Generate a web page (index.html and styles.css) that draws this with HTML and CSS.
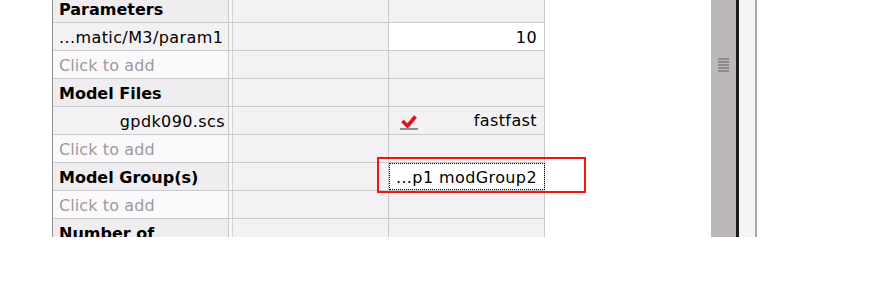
FILE: index.html
```html
<!DOCTYPE html>
<html lang="en">
  <head>
    <meta charset="UTF-8" />
    <title>Model Setup</title>
    <link rel="stylesheet" href="styles.css">
  </head>
  <body>
    <div class="view">
      <div class="grid">
        <div class="rows">
          <div class="row head">
            <div class="cell c1">Parameters</div>
            <div class="cell c2"></div>
            <div class="cell c3"></div>
          </div>
          <div class="row">
            <div class="cell c1">...matic/M3/param1</div>
            <div class="cell c2"></div>
            <div class="cell c3 edit num">10</div>
          </div>
          <div class="row">
            <div class="cell c1 add">Click to add</div>
            <div class="cell c2"></div>
            <div class="cell c3"></div>
          </div>
          <div class="row head">
            <div class="cell c1">Model Files</div>
            <div class="cell c2"></div>
            <div class="cell c3"></div>
          </div>
          <div class="row">
            <div class="cell c1 num">gpdk090.scs</div>
            <div class="cell c2"></div>
            <div class="cell c3 check">
              <svg class="tick" width="18" height="16" viewBox="0 0 18 16">
                <rect x="0" y="0" width="18" height="14" fill="#f1eff1" />
                <rect x="0" y="14" width="18" height="2" fill="#8c8a8c" />
                <polyline points="2.5,7 7.5,12 15.5,2.5" fill="none" stroke="#e2121e" stroke-width="3.6" stroke-linejoin="round" />
              </svg>
              <span>fastfast</span>
            </div>
          </div>
          <div class="row">
            <div class="cell c1 add">Click to add</div>
            <div class="cell c2"></div>
            <div class="cell c3"></div>
          </div>
          <div class="row head">
            <div class="cell c1">Model Group(s)</div>
            <div class="cell c2"></div>
            <div class="cell c3 focus">...p1 modGroup2</div>
          </div>
          <div class="row">
            <div class="cell c1 add">Click to add</div>
            <div class="cell c2"></div>
            <div class="cell c3"></div>
          </div>
          <div class="row head">
            <div class="cell c1">Number of</div>
            <div class="cell c2"></div>
            <div class="cell c3"></div>
          </div>
        </div>
      </div>

      <div class="scrollbar">
        <div class="track">
          <div class="grip">
            <span></span><span></span><span></span><span></span><span></span>
          </div>
        </div>
        <div class="edge"></div>
        <div class="gutter"></div>
      </div>

      <div class="highlight"></div>
    </div>
  </body>
</html>
```

FILE: styles.css
```css
body {
  margin: 0;
  background: #ffffff;
  font-family: "DejaVu Sans", Verdana, sans-serif;
  font-size: 16px;
  color: #000000;
}
.view {
  position: relative;
  display: flex;
  height: 237px;
  padding-left: 52px;
}
.grid {
  width: 493px;
  height: 237px;
  overflow: hidden;
  border-left: 1px solid #8e8e8e;
  box-sizing: border-box;
}
.rows {
  margin-top: -5px;
}
.row {
  display: grid;
  grid-template-columns: 176px 160px 156px;
  height: 28px;
  box-sizing: border-box;
  border-bottom: 1px solid #c9c9c9;
}
.cell {
  height: 27px;
  line-height: 29px;
  padding: 0 7px 0 6px;
  letter-spacing: 0.4px;
  white-space: nowrap;
  overflow: hidden;
  background: #f3f1f3;
  border-right: 1px solid #c9c9c9;
}
.c1 {
  padding-right: 3px;
}
.c2 {
  background: linear-gradient(to right, #f8f6f8 0 3px, #d2d0d2 3px 4px, #f3f1f3 4px);
}
.head .c1 {
  font-weight: bold;
  letter-spacing: 0;
  background: #efedef;
}
.add {
  color: #9c9a9c;
  letter-spacing: 0.1px;
  background: #fbf9fb;
}
.num {
  text-align: right;
}
.edit {
  background: #ffffff;
}
.check {
  display: flex;
  align-items: center;
  justify-content: space-between;
  padding-left: 11px;
}
.tick {
  display: block;
  margin-top: 2px;
}
.focus {
  background: #ffffff;
  outline: 1px dotted #000000;
  outline-offset: -1px;
  text-align: right;
}
.highlight {
  position: absolute;
  left: 377px;
  top: 157px;
  width: 209px;
  height: 36px;
  box-sizing: border-box;
  border: 2px solid #f21414;
}
.scrollbar {
  display: flex;
  margin-left: 166px;
  height: 237px;
}
.track {
  width: 25px;
  background: #bbb7bb;
}
.grip {
  display: flex;
  flex-direction: column;
  gap: 1px;
  width: 11px;
  margin: 58px 0 0 7px;
}
.grip span {
  height: 2px;
  background: #8d8a8d;
}
.edge {
  width: 3px;
  background: #1c1c1c;
}
.gutter {
  width: 16px;
  background: #f6f4f6;
  border-right: 2px solid #a8a8a8;
}
```
